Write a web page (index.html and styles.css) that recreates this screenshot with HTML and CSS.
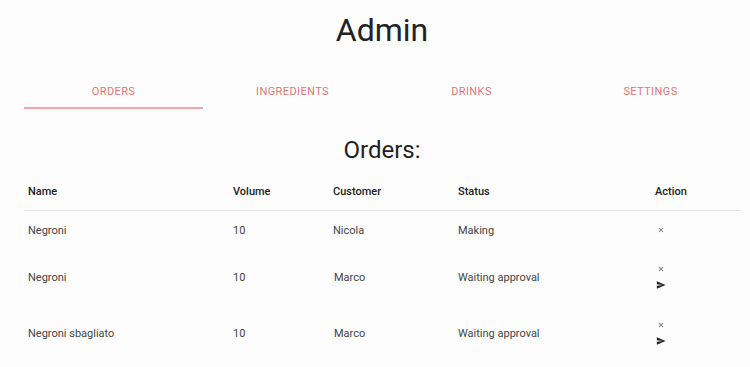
FILE: index.html
```html
<!DOCTYPE html>
<html lang="en">
<head>
  <meta charset="UTF-8" />
  <title>Admin</title>
  <link rel="stylesheet" href="styles.css">
</head>
<body>
  <div class="page">
    <h1>Admin</h1>

    <nav class="tabs">
      <a class="tab active" href="#">Orders</a>
      <a class="tab" href="#">Ingredients</a>
      <a class="tab" href="#">Drinks</a>
      <a class="tab" href="#">Settings</a>
    </nav>

    <h2>Orders:</h2>

    <table class="orders">
      <colgroup>
        <col class="c-name">
        <col class="c-volume">
        <col class="c-customer">
        <col class="c-status">
        <col class="c-action">
      </colgroup>
      <thead>
        <tr>
          <th>Name</th>
          <th>Volume</th>
          <th>Customer</th>
          <th>Status</th>
          <th>Action</th>
        </tr>
      </thead>
      <tbody>
        <tr class="single">
          <td>Negroni</td>
          <td>10</td>
          <td>Nicola</td>
          <td>Making</td>
          <td>
            <button class="icon-btn" title="Delete">
              <svg viewBox="0 0 24 24" width="8" height="8"><path d="M19 6.41L17.59 5 12 10.59 6.41 5 5 6.41 10.59 12 5 17.59 6.41 19 12 13.41 17.59 19 19 17.59 13.41 12z"/></svg>
            </button>
          </td>
        </tr>
        <tr class="double">
          <td>Negroni</td>
          <td>10</td>
          <td class="indent">Marco</td>
          <td>Waiting approval</td>
          <td>
            <button class="icon-btn" title="Delete">
              <svg viewBox="0 0 24 24" width="8" height="8"><path d="M19 6.41L17.59 5 12 10.59 6.41 5 5 6.41 10.59 12 5 17.59 6.41 19 12 13.41 17.59 19 19 17.59 13.41 12z"/></svg>
            </button>
            <button class="icon-btn send" title="Approve">
              <svg viewBox="0 0 24 24" width="10" height="10"><path d="M2.01 21L23 12 2.01 3 2 10l15 2-15 2z"/></svg>
            </button>
          </td>
        </tr>
        <tr class="double">
          <td>Negroni sbagliato</td>
          <td>10</td>
          <td class="indent">Marco</td>
          <td>Waiting approval</td>
          <td>
            <button class="icon-btn" title="Delete">
              <svg viewBox="0 0 24 24" width="8" height="8"><path d="M19 6.41L17.59 5 12 10.59 6.41 5 5 6.41 10.59 12 5 17.59 6.41 19 12 13.41 17.59 19 19 17.59 13.41 12z"/></svg>
            </button>
            <button class="icon-btn send" title="Approve">
              <svg viewBox="0 0 24 24" width="10" height="10"><path d="M2.01 21L23 12 2.01 3 2 10l15 2-15 2z"/></svg>
            </button>
          </td>
        </tr>
      </tbody>
    </table>
  </div>
</body>
</html>
```

FILE: styles.css
```css
body {
  margin: 0;
  background: #fdfdfd;
  font-family: Roboto, 'Liberation Sans', sans-serif;
  color: #333;
}
.page {
  margin: 0 10px 0 24px;
}
h1 {
  margin: 10px 0 0;
  font-size: 32px;
  line-height: 40px;
  font-weight: 400;
  text-align: center;
  color: #222;
}
.tabs {
  display: flex;
  margin-top: 26px;
}
.tab {
  flex: 1;
  height: 31px;
  line-height: 31px;
  text-align: center;
  text-decoration: none;
  text-transform: uppercase;
  font-size: 11px;
  letter-spacing: 0.4px;
  color: #e57373;
  border-bottom: 2px solid transparent;
}
.tab.active {
  border-bottom-color: #f4a4a4;
}
h2 {
  margin: 26px 0 0;
  font-size: 24px;
  line-height: 30px;
  font-weight: 400;
  text-align: center;
  color: #222;
}
.orders {
  width: 100%;
  margin-top: 7px;
  border-collapse: collapse;
  table-layout: fixed;
  font-size: 11px;
}
.c-name { width: 205px; }
.c-volume { width: 100px; }
.c-customer { width: 125px; }
.c-status { width: 197px; }
.c-action { width: 89px; }
.orders th {
  height: 38px;
  padding: 0 4px;
  text-align: left;
  font-weight: 500;
  color: #222;
  border-bottom: 1px solid #e2e2e2;
}
.orders td {
  padding: 0 4px;
  vertical-align: middle;
  color: #444;
}
.orders td.indent {
  padding-left: 5px;
}
.orders tr.single td { height: 38px; }
.orders tr.double td { height: 56px; }
.icon-btn {
  display: flex;
  align-items: center;
  width: 16px;
  height: 16px;
  padding: 0 0 0 2px;
  border: none;
  background: none;
  cursor: pointer;
  fill: #555;
}
.icon-btn.send {
  fill: #222;
  padding-left: 1px;
}
```
